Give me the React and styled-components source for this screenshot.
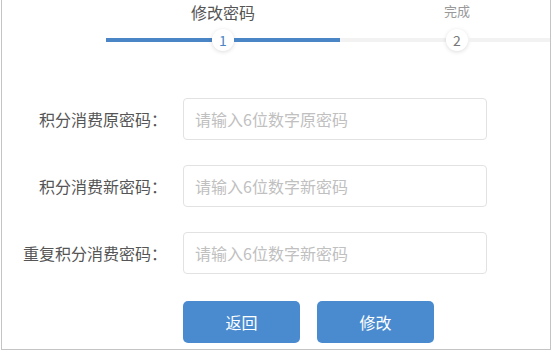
import React from "react";
import styled, { createGlobalStyle } from "styled-components";

const GlobalStyle = createGlobalStyle`
  body {
    margin: 0;
    background: #fff;
    font-family: "Noto Sans CJK SC", "Noto Sans", sans-serif;
  }
`;

const Frame = styled.div`
  box-sizing: border-box;
  width: 550px;
  height: 350px;
  margin-left: 1px;
  border: 1px solid #c4c4c4;
  border-top: none;
  overflow: hidden;
  background: #fff;
`;

const Steps = styled.div`
  display: flex;
  padding-left: 104px;
  width: 800px;
`;

const Step = styled.div`
  flex: 0 0 234px;
  display: flex;
  flex-direction: column;
  align-items: center;
`;

const StepTitle = styled.div`
  height: 22px;
  margin-top: 1px;
  line-height: ${({ active }) => (active ? "22px" : "19px")};
  font-size: ${({ active }) => (active ? "16px" : "13px")};
  color: ${({ active }) => (active ? "#555" : "#999")};
`;

const StepTrack = styled.div`
  display: flex;
  align-items: center;
  width: 100%;
  margin-top: 6px;
`;

const StepLine = styled.div`
  flex: 1;
  height: 4px;
  background: ${({ active }) => (active ? "#4a86c5" : "#f2f2f2")};
`;

const StepCircle = styled.div`
  flex: 0 0 22px;
  height: 22px;
  border-radius: 50%;
  background: #fff;
  box-shadow: 0 1px 4px rgba(0, 0, 0, 0.14);
  display: flex;
  align-items: center;
  justify-content: center;
  font-size: 14px;
  color: ${({ active }) => (active ? "#4a86c5" : "#777")};
`;

const Form = styled.div`
  display: flex;
  flex-direction: column;
  gap: 25px;
  margin-top: 47px;
`;

const Row = styled.div`
  display: flex;
  align-items: center;
  gap: 16px;
`;

const Label = styled.label`
  width: 165px;
  text-align: right;
  font-size: 16px;
  color: #555;
  white-space: nowrap;
`;

const Input = styled.input`
  box-sizing: border-box;
  width: 304px;
  height: 42px;
  padding: 0 11px;
  border: 1px solid #e2e2e2;
  border-radius: 4px;
  font-family: inherit;
  font-size: 16px;
  color: #333;
  outline: none;

  &::placeholder {
    color: #c0c0c0;
  }
`;

const Actions = styled.div`
  display: flex;
  gap: 17px;
  padding-left: 181px;
  margin-top: 27px;
`;

const Button = styled.button`
  width: 117px;
  height: 42px;
  border: none;
  border-radius: 5px;
  background: #4a8bd0;
  color: #fff;
  font-family: inherit;
  font-size: 16px;
  cursor: pointer;
`;

const steps = [
  { title: "修改密码", active: true },
  { title: "完成", active: false },
];

const fields = [
  { label: "积分消费原密码：", placeholder: "请输入6位数字原密码" },
  { label: "积分消费新密码：", placeholder: "请输入6位数字新密码" },
  { label: "重复积分消费密码：", placeholder: "请输入6位数字新密码" },
];

const App = () => (
  <>
    <GlobalStyle />
    <Frame>
      <Steps>
        {steps.map(({ title, active }, i) => (
          <Step key={title}>
            <StepTitle active={active ? 1 : 0}>{title}</StepTitle>
            <StepTrack>
              <StepLine active={active ? 1 : 0} />
              <StepCircle active={active ? 1 : 0}>{i + 1}</StepCircle>
              <StepLine active={active ? 1 : 0} />
            </StepTrack>
          </Step>
        ))}
      </Steps>
      <Form>
        {fields.map(({ label, placeholder }) => (
          <Row key={label}>
            <Label>{label}</Label>
            <Input type="password" placeholder={placeholder} />
          </Row>
        ))}
      </Form>
      <Actions>
        <Button>返回</Button>
        <Button>修改</Button>
      </Actions>
    </Frame>
  </>
);

export default App;
